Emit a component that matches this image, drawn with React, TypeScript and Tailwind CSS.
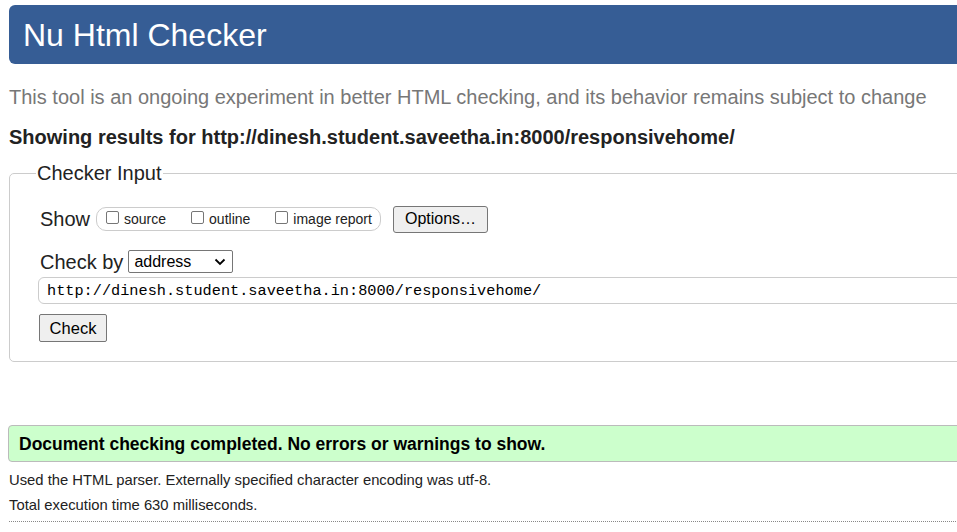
import React from 'react';

const URL = 'http://dinesh.student.saveetha.in:8000/responsivehome/';

const Checkbox: React.FC<{ label: string }> = ({ label }) => (
  <label className="flex items-end">
    <span className="w-[13px] h-[13px] border border-[#767676] rounded-[2px] bg-white mr-[5px] mb-[3px]" />
    <span className="text-[14px] leading-[16px] text-[#222]">{label}</span>
  </label>
);

const App: React.FC = () => {
  return (
    <div className="w-[957px] h-[532px] overflow-hidden bg-white font-['Liberation_Sans',Arial,sans-serif] text-[#222]">
      <div className="w-[1000px] pl-[9px]">
        {/* Title bar */}
        <div className="mt-[5px] h-[59px] bg-[#365d95] rounded-l-[6px] pl-[14px] flex items-center">
          <h1 className="text-[32px] leading-[36px] text-white">Nu Html Checker</h1>
        </div>

        <p className="mt-[21px] text-[20px] leading-[24px] text-[#777] whitespace-nowrap">
          This tool is an ongoing experiment in better HTML checking, and its behavior remains subject to change
        </p>
        <p className="mt-[16px] text-[20px] leading-[24px] font-bold whitespace-nowrap">
          Showing results for {URL}
        </p>

        {/* Checker Input */}
        <fieldset className="mt-[13px] border border-[#ccc] rounded-[5px] pl-[30px] pt-[21px] pb-[19px]">
          <legend className="-ml-[4px] px-px text-[20px] leading-[23px]">Checker Input</legend>

          <div className="flex items-center h-[26px]">
            <span className="text-[20px] leading-[24px] mr-[6px]">Show</span>
            <div className="flex items-center h-[24px] border border-[#ccc] rounded-[10px] pl-[9px] pr-[8px] gap-[25px] w-[285px]">
              <Checkbox label="source" />
              <Checkbox label="outline" />
              <Checkbox label="image report" />
            </div>
            <button
              type="button"
              className="ml-[12px] h-[27px] w-[95px] bg-[#efefef] border border-[#767676] rounded-[3px] text-[16px] leading-[18px] text-black"
            >
              Options…
            </button>
          </div>

          <div className="mt-[18px] flex items-center h-[23px]">
            <span className="text-[20px] leading-[24px] mr-[5px]">Check by</span>
            <div className="h-[23px] w-[105px] border border-[#767676] rounded-[2px] flex items-center justify-between pl-[5px] pr-[6px]">
              <span className="text-[16px] leading-[18px] text-black">address</span>
              <svg width="12" height="8" viewBox="0 0 12 8" fill="none">
                <path d="M1.5 1.5 L6 6 L10.5 1.5" stroke="#000" strokeWidth="1.8" />
              </svg>
            </div>
          </div>

          <div className="mt-[4px] -ml-[2px] h-[27px] border border-[#ccc] rounded-[6px] flex items-center pl-[8px]">
            <span className="font-['Liberation_Mono',monospace] text-[15.25px] leading-[18px] text-black">{URL}</span>
          </div>

          <button
            type="button"
            className="mt-[10px] -ml-[1px] h-[28px] w-[68px] bg-[#efefef] border border-[#767676] rounded-[2px] text-[16.5px] leading-[18px] text-black"
          >
            Check
          </button>
        </fieldset>

        {/* Result */}
        <div className="mt-[63px] -ml-[1px] h-[37px] bg-[#ccffcc] border border-[#bbb] rounded-l-[4px] flex items-center pl-[10px]">
          <span className="text-[17.5px] leading-[20px] font-bold text-black">
            Document checking completed. No errors or warnings to show.
          </span>
        </div>

        <p className="mt-[6px] text-[14.8px] leading-[25px] text-[#222]">
          Used the HTML parser. Externally specified character encoding was utf-8.
        </p>
        <p className="text-[14.8px] leading-[25px] text-[#222]">Total execution time 630 milliseconds.</p>
        <div className="mt-[3px] border-t border-dotted border-[#888]" />
      </div>
    </div>
  );
};

export default App;
